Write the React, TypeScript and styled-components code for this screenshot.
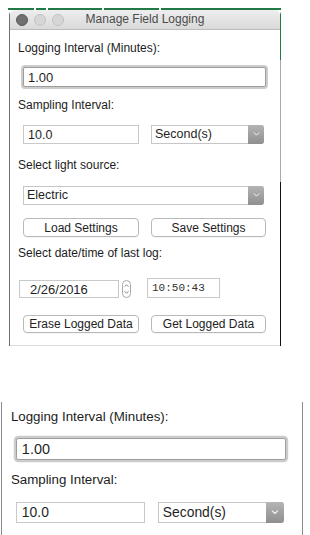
import React, { FC } from "react";
import styled, { createGlobalStyle } from "styled-components";

const GlobalStyle = createGlobalStyle`
    *, *::before, *::after{
        box-sizing: border-box;
    }
    html, body{
        margin: 0;
        padding: 0;
        height: 535px;
        overflow: hidden;
        background: #fff;
    }
    body{
        font-family: "Liberation Sans", Arial, sans-serif;
        color: #1f1f1f;
    }
    input, button{
        font: inherit;
        color: inherit;
    }
`;

const Page = styled.div`
    width: 310px;
    height: 535px;
    display: flex;
    flex-direction: column;
    overflow: hidden;
`;

const TopArea = styled.div`
    padding: 8px 0 0 8px;
`;

const GreenRule = styled.div`
    width: 273px;
    height: 2px;
    background: linear-gradient(to right,
        #217a45 0 26px, #fff 26px 28px,
        #217a45 28px 38px, #fff 38px 40px,
        #217a45 40px 94px, #fff 94px 96px,
        #217a45 96px 151px, #fff 151px 153px,
        #217a45 153px);
`;

const Window = styled.div`
    margin-left: 1px;
    width: 272px;
    padding: 0 1px;
    background:
        linear-gradient(#6f6f6f, #6f6f6f) left top / 1px 100% no-repeat,
        linear-gradient(to bottom, #217a45 0 50px, #a9a9a9 50px 172px, #111 172px) right top / 1px 100% no-repeat,
        #fff;
    border-radius: 5px 5px 0 0;
`;

const TitleBar = styled.div`
    height: 20px;
    display: grid;
    grid-template-columns: 1fr auto 1fr;
    align-items: center;
    padding: 0 6px;
    background: linear-gradient(#eeeeee, #d9d9d9);
    border-bottom: 1px solid #bcbcbc;
    border-radius: 5px 5px 0 0;
`;

const Lights = styled.div`
    display: flex;
    gap: 6px;
`;

const Light = styled.span<{ $active?: boolean }>`
    width: 12px;
    height: 12px;
    border-radius: 50%;
    background: ${p => p.$active ? "#707070" : "#d6d6d6"};
    border: 1px solid ${p => p.$active ? "#5c5c5c" : "#c2c2c2"};
`;

const Title = styled.span`
    font-size: 12px;
    color: #4b4b4b;
    line-height: 19px;
`;

const Body = styled.div<{ $top: number; $bottom: number }>`
    padding: ${p => p.$top}px 0 ${p => p.$bottom}px 8px;
    display: flex;
    flex-direction: column;
    align-items: flex-start;
`;

const Label = styled.div<{ $mt: number }>`
    margin-top: ${p => p.$mt}px;
    font-size: 12px;
    line-height: 15px;
    color: #1c1c1c;
`;

const Row = styled.div<{ $mt: number; $ml?: number; $gap?: number }>`
    margin-top: ${p => p.$mt}px;
    margin-left: ${p => p.$ml ?? 5}px;
    display: flex;
    align-items: flex-start;
    gap: ${p => p.$gap ?? 12}px;
`;

const FocusField = styled.input`
    margin: 11px 0 0 5px;
    width: 243px;
    height: 20px;
    padding: 0 0 0 4px;
    border: 1px solid #9d9d9d;
    border-radius: 2px;
    box-shadow: 0 0 0 2px #cccccc;
    font-size: 13px;
    background: #fff;
    outline: none;
`;

const TextField = styled.input<{ $w: number }>`
    width: ${p => p.$w}px;
    height: 19px;
    padding: 0 0 0 4px;
    border: 1px solid #c9c9c9;
    font-size: 12.5px;
    background: #fff;
    outline: none;
`;

const DateField = styled.input`
    width: 100px;
    height: 18px;
    margin-top: 2px;
    padding: 0 0 0 10px;
    border: 1px solid #c9c9c9;
    font-size: 13px;
    background: #fff;
    outline: none;
`;

const TimeField = styled.input`
    width: 73px;
    height: 20px;
    margin-left: 16px;
    padding: 0 0 0 4px;
    border: 1px solid #c9c9c9;
    font-family: "Liberation Mono", "Courier New", monospace;
    font-size: 11px;
    color: #333;
    background: #fff;
    outline: none;
`;

const Stepper = styled.div`
    width: 9px;
    height: 18px;
    margin: 2px 0 0 3px;
    border: 1px solid #a9a9a9;
    border-radius: 5px;
    display: flex;
    flex-direction: column;
    align-items: center;
    justify-content: space-between;
    padding: 3px 0;
    background: #fff;
`;

const SelectBox = styled.div<{ $w: number }>`
    width: ${p => p.$w}px;
    height: 19px;
    display: flex;
    align-items: stretch;
    border: 1px solid #c6c6c6;
    border-right: none;
    border-radius: 0 3px 3px 0;
    background: #fff;
    font-size: 12.5px;
`;

const SelectText = styled.span`
    flex: 1;
    padding-left: 3px;
    line-height: 17px;
`;

const SelectButton = styled.span`
    width: 16px;
    margin: -1px 0;
    border-radius: 0 3px 3px 0;
    background: linear-gradient(#b4b4b4, #8f8f8f);
    display: flex;
    align-items: center;
    justify-content: center;
`;

const PushButton = styled.button<{ $w: number; $h?: number }>`
    width: ${p => p.$w}px;
    height: ${p => p.$h ?? 19}px;
    padding: 0;
    border: 1px solid #b9b9b9;
    border-radius: 4px;
    background: #fff;
    font-size: 12px;
    color: #222;
    line-height: 1;
    box-shadow: 0 1px 0 rgba(0, 0, 0, 0.04);
`;

const WindowBottom = styled.div`
    border-bottom: 1px solid #dcdcdc;
`;

const LowerArea = styled.div`
    flex: 1;
    min-height: 0;
    padding: 56px 0 0 1px;
    display: flex;
`;

const LowerFrame = styled.div`
    zoom: 1.11;
    width: 272px;
    border-left: 1px solid #8c8c8c;
    border-right: 1px solid #8c8c8c;
    background: #fff;
`;

const Chevron: FC<{ up?: boolean; color: string; w: number }> = ({ up, color, w }) => (
    <svg width={w} height={w * 0.6} viewBox="0 0 10 6">
        <path d={up ? "M1.5 5 L5 1.5 L8.5 5" : "M1.5 1 L5 4.5 L8.5 1"} fill="none" stroke={color} strokeWidth="1.4" strokeLinecap="round" strokeLinejoin="round" />
    </svg>
);

const Select: FC<{ w: number; value: string }> = ({ w, value }) => (
    <SelectBox $w={w}>
        <SelectText>{value}</SelectText>
        <SelectButton><Chevron color="#f4f4f4" w={7} /></SelectButton>
    </SelectBox>
);

const IntervalFields: FC = () => (
    <>
        <Label $mt={0}>Logging Interval (Minutes):</Label>
        <FocusField defaultValue="1.00" readOnly />
        <Label $mt={11}>Sampling Interval:</Label>
        <Row $mt={12}>
            <TextField $w={116} defaultValue="10.0" readOnly />
            <Select w={113} value="Second(s)" />
        </Row>
    </>
);

const App: FC = () => {
    return (
        <Page>
            <GlobalStyle />
            <TopArea>
                <GreenRule />
                <Window>
                    <TitleBar>
                        <Lights>
                            <Light $active />
                            <Light />
                            <Light />
                        </Lights>
                        <Title>Manage Field Logging</Title>
                        <span />
                    </TitleBar>
                    <WindowBottom>
                        <Body $top={11} $bottom={12}>
                            <IntervalFields />
                            <Label $mt={14}>Select light source:</Label>
                            <Row $mt={13}>
                                <Select w={241} value="Electric" />
                            </Row>
                            <Row $mt={13}>
                                <PushButton $w={116}>Load Settings</PushButton>
                                <PushButton $w={115}>Save Settings</PushButton>
                            </Row>
                            <Label $mt={9}>Select date/time of last log:</Label>
                            <Row $mt={17} $ml={1} $gap={0}>
                                <DateField defaultValue="2/26/2016" readOnly />
                                <Stepper>
                                    <Chevron up color="#555" w={5} />
                                    <Chevron color="#555" w={5} />
                                </Stepper>
                                <TimeField defaultValue="10:50:43" readOnly />
                            </Row>
                            <Row $mt={17}>
                                <PushButton $w={116} $h={18}>Erase Logged Data</PushButton>
                                <PushButton $w={115} $h={18}>Get Logged Data</PushButton>
                            </Row>
                        </Body>
                    </WindowBottom>
                </Window>
            </TopArea>
            <LowerArea>
                <LowerFrame>
                    <Body $top={6} $bottom={0}>
                        <IntervalFields />
                    </Body>
                </LowerFrame>
            </LowerArea>
        </Page>
    );
};

export default App;
